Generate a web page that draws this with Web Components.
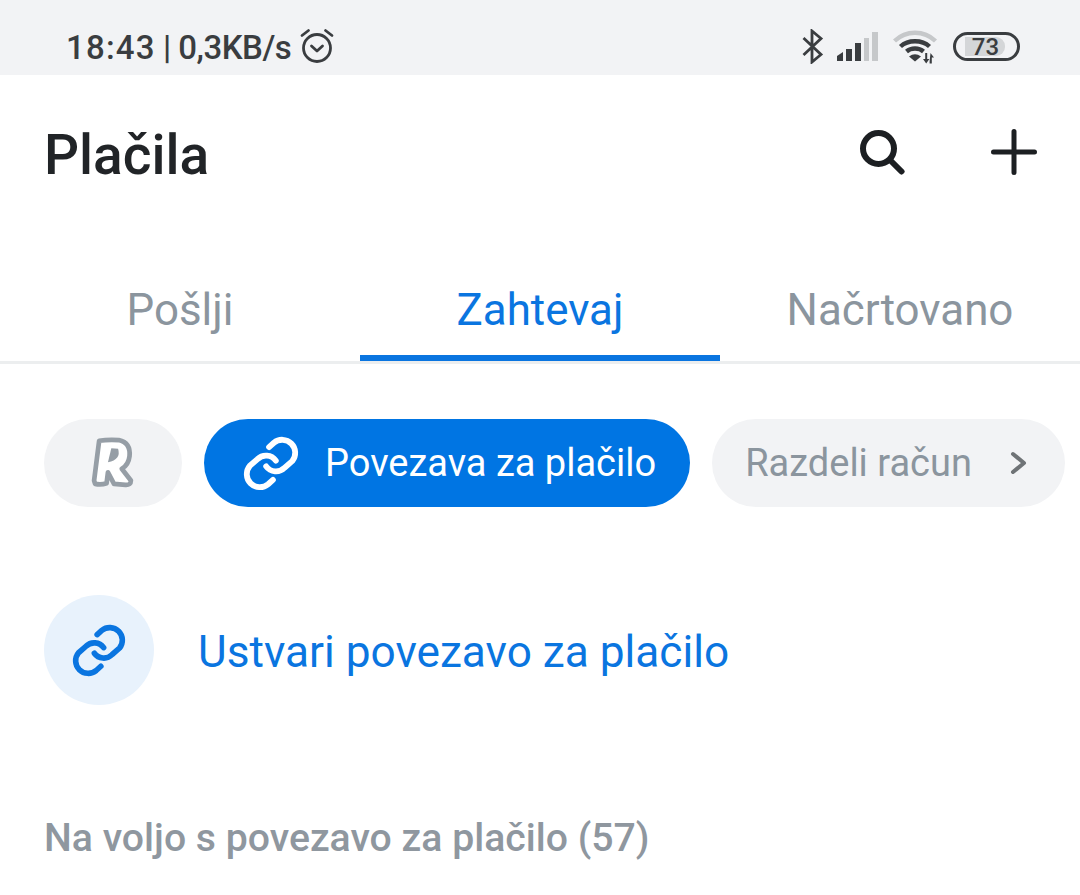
<!DOCTYPE html>
<html>
<head>
<meta charset="utf-8">
<title>Plačila</title>
<style>
  html, body { margin: 0; background: #fff; }
  body { font-family: Roboto, "Liberation Sans", sans-serif; width: 1080px; height: 895px; overflow: hidden; }
</style>
</head>
<body>
<status-bar></status-bar>
<page-header title="Plačila"></page-header>
<tab-row>
  <tab-item>Pošlji</tab-item>
  <tab-item active>Zahtevaj</tab-item>
  <tab-item>Načrtovano</tab-item>
</tab-row>
<pill-row>
  <logo-pill></logo-pill>
  <action-pill active>Povezava za plačilo</action-pill>
  <action-pill chevron>Razdeli račun</action-pill>
</pill-row>
<action-row>Ustvari povezavo za plačilo</action-row>
<section-title>Na voljo s povezavo za plačilo (57)</section-title>

<script>
class LinkIcon extends HTMLElement {
  connectedCallback() {
    const size = this.getAttribute('size') || 54;
    this.attachShadow({ mode: 'open' });
    this.shadowRoot.innerHTML = `
      <style>
        :host { display: block; width: ${size}px; height: ${size}px; }
        svg { display: block; width: 100%; height: 100%; }
      </style>
      <svg viewBox="40 35.5 58 58" fill="none" stroke="currentColor" stroke-width="6" stroke-linecap="round">
        <path d="M67 48 L72 43.5 A13.5 13.5 0 0 1 91 62.5 L83 69.5 A12.5 12.5 0 0 1 64 68"/>
        <path d="M71 82 L66 86.5 A13.5 13.5 0 0 1 47 67.5 L55 60.5 A12.5 12.5 0 0 1 74 62"/>
      </svg>`;
  }
}
customElements.define('link-icon', LinkIcon);

class StatusBar extends HTMLElement {
  connectedCallback() {
    this.attachShadow({ mode: 'open' });
    this.shadowRoot.innerHTML = `
      <style>
        :host { display: flex; align-items: center; height: 75px; padding: 20px 60px 0 66px; box-sizing: border-box; background: #f2f3f5; color: #3a3d40; }
        .time { font-size: 33px; font-weight: 500; white-space: nowrap; word-spacing: -1px; }
        .clock { letter-spacing: 1.2px; }
        .speed { letter-spacing: -0.5px; }
        .icons { margin-left: auto; display: flex; align-items: center; }
        svg { display: block; }
        .alarm { margin: -4px 0 0 9px; }
        .bt { margin: -2px 0 0 2px; }
        .signal { margin: -2px 0 0 13px; }
        .wifi { margin: -1px 0 0 15px; }
        .battery { position: relative; margin: -2px 0 0 15px; box-sizing: border-box; width: 67px; height: 29px; border: 3px solid #3a3d40; border-radius: 15px; padding: 2px 3px; }
        .level { height: 100%; width: 73%; margin-left: 6px; background: #d4d6d8; border-radius: 0 9px 9px 0; }
        .pct { position: absolute; left: 0; right: 0; top: 0; bottom: 0; display: flex; align-items: center; justify-content: center; font-size: 24px; font-weight: 500; padding-right: 2px; }
      </style>
      <span class="time"><span class="clock">18:43</span> | <span class="speed">0,3KB/s</span></span>
      <svg class="alarm" width="34" height="36" viewBox="0 0 34 36" fill="none" stroke="#3a3d40" stroke-width="2.8" stroke-linecap="round" stroke-linejoin="round">
        <circle cx="17" cy="20" r="13.5"/>
        <path d="M11.5 18 L17 23 L22.5 18"/>
        <path d="M2 7.5 L8.5 2.5"/>
        <path d="M32 7.5 L25.5 2.5"/>
      </svg>
      <div class="icons">
        <svg class="bt" width="22" height="35" viewBox="0 0 22 35" fill="none" stroke="#3a3d40" stroke-width="2.8" stroke-linejoin="miter">
          <path d="M1.5 9 L19 25.5 L10 33 V2 L19 9.5 L1.5 26"/>
        </svg>
        <svg class="signal" width="41" height="29" viewBox="0 0 41 29">
          <path fill="#3a3d40" d="M0 24 L6 20 V29 H0 Z M9 17 h6 V29 h-6 Z M18 11 h6 V29 h-6 Z"/>
          <path fill="#c6c8ca" d="M27 6 h5 V29 h-5 Z M35 0 h6 V29 h-6 Z"/>
        </svg>
        <svg class="wifi" width="45" height="35" viewBox="0 0 45 35" fill="none" stroke-width="4.4">
          <path stroke="#c6c8ca" d="M1.5 11 C13 0 31 0 42.5 11"/>
          <path stroke="#3a3d40" d="M7.5 16.5 C15 9.5 29 9.5 36.5 16.5"/>
          <path stroke="#3a3d40" d="M13.5 21.5 C18 17.5 26 17.5 30.5 21.5"/>
          <path fill="#3a3d40" stroke="none" d="M16 26.5 Q22 22 28 26.5 L22 31.5 Z"/>
          <path fill="#3a3d40" stroke="none" d="M30 29 h2.2 v-6 h2 v6 h2.2 L33.2 33.5 Z M37.5 23 L41 27.5 h-2.4 v6 h-2 v-2 Z M37.4 27 h1.4 v6.5 h-1.4 Z"/>
        </svg>
        <div class="battery">
          <div class="level"></div>
          <div class="pct">73</div>
        </div>
      </div>`;
  }
}
customElements.define('status-bar', StatusBar);

class PageHeader extends HTMLElement {
  connectedCallback() {
    this.attachShadow({ mode: 'open' });
    this.shadowRoot.innerHTML = `
      <style>
        :host { display: flex; align-items: center; height: 160px; padding: 0 43px 0 44px; box-sizing: border-box; color: #212427; }
        h1 { margin: 0; font-size: 55px; font-weight: 500; line-height: 60px; }
        .actions { margin-left: auto; display: flex; align-items: center; gap: 86px; margin-top: -6px; }
        svg { display: block; }
      </style>
      <h1>${this.getAttribute('title')}</h1>
      <div class="actions">
        <svg width="46" height="46" viewBox="0 0 46 46" fill="none" stroke="#1c1f22" stroke-width="6" stroke-linecap="round">
          <circle cx="19.5" cy="19.5" r="15.5"/>
          <path d="M31 31 L42.5 42.5"/>
        </svg>
        <svg width="46" height="46" viewBox="0 0 46 46" fill="none" stroke="#1c1f22" stroke-width="5" stroke-linecap="round">
          <path d="M23 2.5 V43.5 M2.5 23 H43.5"/>
        </svg>
      </div>`;
  }
}
customElements.define('page-header', PageHeader);

class TabRow extends HTMLElement {
  connectedCallback() {
    this.attachShadow({ mode: 'open' });
    this.shadowRoot.innerHTML = `
      <style>
        :host { display: grid; grid-template-columns: repeat(3, 360px); height: 129px; box-sizing: border-box; border-bottom: 3px solid #eceeef; }
      </style>
      <slot></slot>`;
  }
}
customElements.define('tab-row', TabRow);

class TabItem extends HTMLElement {
  connectedCallback() {
    this.attachShadow({ mode: 'open' });
    this.shadowRoot.innerHTML = `
      <style>
        :host { display: flex; align-items: flex-end; justify-content: center; box-sizing: border-box; padding-bottom: 20px; border-bottom: 6px solid transparent; font-size: 43.9px; line-height: 50px; color: #8b959e; }
        :host([active]) { color: #0a75e0; border-bottom-color: #0a75e0; }
      </style>
      <slot></slot>`;
  }
}
customElements.define('tab-item', TabItem);

class PillRow extends HTMLElement {
  connectedCallback() {
    this.attachShadow({ mode: 'open' });
    this.shadowRoot.innerHTML = `
      <style>
        :host { display: flex; gap: 22px; padding: 55px 0 0 44px; }
      </style>
      <slot></slot>`;
  }
}
customElements.define('pill-row', PillRow);

class LogoPill extends HTMLElement {
  connectedCallback() {
    this.attachShadow({ mode: 'open' });
    this.shadowRoot.innerHTML = `
      <style>
        :host { display: flex; align-items: center; justify-content: center; width: 138px; height: 88px; border-radius: 44px; background: #f2f3f5; }
        svg { display: block; }
      </style>
      <svg width="44" height="54" viewBox="180 80 130 160">
        <path fill="#fff" stroke="#969ea6" stroke-width="14" stroke-linejoin="round" d="M204 94 Q230 90 262 92 Q298 100 294 140 Q291 166 271 177 L298 212 Q298 226 282 225 L248 222 L230 188 L226 220 Q210 226 192 222 L189 212 Z"/>
        <path fill="#969ea6" d="M240 116 L260 118 Q270 150 230 158 Z"/>
      </svg>`;
  }
}
customElements.define('logo-pill', LogoPill);

class ActionPill extends HTMLElement {
  connectedCallback() {
    const active = this.hasAttribute('active');
    const chevron = this.hasAttribute('chevron');
    this.attachShadow({ mode: 'open' });
    this.shadowRoot.innerHTML = `
      <style>
        :host { display: flex; align-items: center; height: 88px; border-radius: 44px; box-sizing: border-box; background: #f2f3f5; color: #8b959e; font-size: 38px; white-space: nowrap; padding: 0 38px 0 33px; }
        :host([active]) { background: #0075e3; color: #fff; padding: 0 34px 0 39px; }
        link-icon { margin-right: 26px; }
        svg { display: block; margin-left: 38px; }
      </style>
      ${active ? '<link-icon size="56"></link-icon>' : ''}
      <slot></slot>
      ${chevron ? `<svg width="17" height="24" viewBox="0 0 17 24" fill="none" stroke="#6f7376" stroke-width="4" stroke-linecap="round" stroke-linejoin="round"><path d="M3 3 L14 12 L3 21"/></svg>` : ''}`;
  }
}
customElements.define('action-pill', ActionPill);

class ActionRow extends HTMLElement {
  connectedCallback() {
    this.attachShadow({ mode: 'open' });
    this.shadowRoot.innerHTML = `
      <style>
        :host { display: flex; align-items: center; gap: 44px; padding: 88px 0 0 44px; color: #0a75e0; font-size: 44.2px; }
        .circle { display: flex; align-items: center; justify-content: center; width: 110px; height: 110px; border-radius: 50%; background: #e8f2fc; }
        .label { padding-top: 3px; }
      </style>
      <div class="circle"><link-icon size="54"></link-icon></div>
      <span class="label"><slot></slot></span>`;
  }
}
customElements.define('action-row', ActionRow);

class SectionTitle extends HTMLElement {
  connectedCallback() {
    this.attachShadow({ mode: 'open' });
    this.shadowRoot.innerHTML = `
      <style>
        :host { display: block; padding: 110px 0 0 44px; color: #8f979f; font-size: 39.2px; font-weight: 500; line-height: 46px; }
      </style>
      <slot></slot>`;
  }
}
customElements.define('section-title', SectionTitle);
</script>
</body>
</html>
